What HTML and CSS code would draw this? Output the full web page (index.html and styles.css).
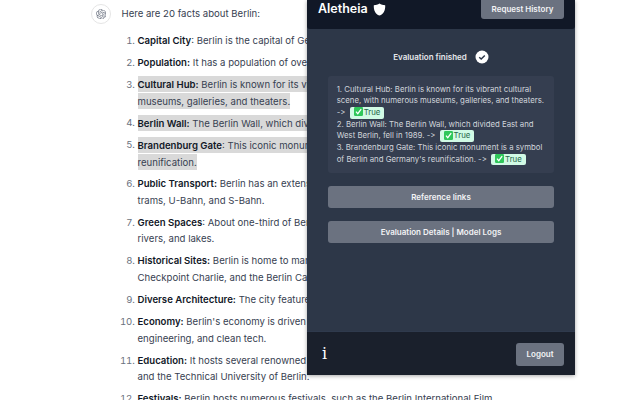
FILE: index.html
```html
<!DOCTYPE html>
<html lang="en">
<head>
<meta charset="utf-8">
<title>Aletheia</title>
<link rel="stylesheet" href="styles.css">
</head>
<body>
<main class="chat">
  <div class="avatar">
    <svg class="logo" viewBox="0 0 41 41" fill="currentColor"><path d="M37.5324 16.8707C37.9808 15.5241 38.1363 14.0974 37.9886 12.6859C37.8409 11.2744 37.3934 9.91076 36.676 8.68622C35.6126 6.83404 33.9882 5.3676 32.0373 4.4985C30.0864 3.62941 27.9098 3.40259 25.8215 3.85078C24.8796 2.7893 23.7219 1.94125 22.4257 1.36341C21.1295 0.785575 19.7249 0.491269 18.3058 0.500197C16.1708 0.495044 14.0893 1.16803 12.3614 2.42214C10.6335 3.67624 9.34853 5.44666 8.6917 7.47815C7.30085 7.76286 5.98686 8.3414 4.8377 9.17505C3.68854 10.0087 2.73073 11.0782 2.02839 12.312C0.956464 14.1591 0.498905 16.2988 0.721698 18.4228C0.944492 20.5467 1.83612 22.5449 3.268 24.1293C2.81966 25.4759 2.66413 26.9026 2.81182 28.3141C2.95951 29.7256 3.40701 31.0892 4.12437 32.3138C5.18791 34.1659 6.8123 35.6322 8.76321 36.5013C10.7141 37.3704 12.8907 37.5973 14.9789 37.1492C15.9208 38.2107 17.0786 39.0587 18.3747 39.6366C19.6709 40.2144 21.0755 40.5087 22.4946 40.4998C24.6307 40.5054 26.7133 39.8321 28.4418 38.5772C30.1704 37.3223 31.4556 35.5506 32.1119 33.5179C33.5027 33.2332 34.8167 32.6547 35.9659 31.821C37.115 30.9874 38.0728 29.9178 38.7752 28.684C39.8458 26.8371 40.3023 24.6979 40.0789 22.5748C39.8556 20.4517 38.9639 18.4544 37.5324 16.8707ZM22.4978 37.8849C20.7443 37.8874 19.0459 37.2733 17.6994 36.1501C17.7601 36.117 17.8666 36.0586 17.936 36.0161L25.9004 31.4156C26.1003 31.3019 26.2663 31.137 26.3813 30.9378C26.4964 30.7386 26.5563 30.5124 26.5549 30.2825V19.0542L29.9213 20.998C29.9389 21.0068 29.9541 21.0198 29.9656 21.0359C29.977 21.052 29.9842 21.0707 29.9867 21.0902V30.3889C29.9842 32.375 29.1946 34.2791 27.7909 35.6841C26.3872 37.0892 24.4838 37.8806 22.4978 37.8849ZM6.39227 31.0064C5.51397 29.4888 5.19742 27.7107 5.49804 25.9832C5.55718 26.0187 5.66048 26.0818 5.73461 26.1244L13.699 30.7248C13.8975 30.8408 14.1233 30.902 14.3532 30.902C14.583 30.902 14.8088 30.8408 15.0073 30.7248L24.731 25.1103V28.9979C24.7321 29.0177 24.7283 29.0376 24.7199 29.0556C24.7115 29.0736 24.6988 29.0893 24.6829 29.1012L16.6317 33.7497C14.9096 34.7416 12.8643 35.0097 10.9447 34.4954C9.02506 33.9811 7.38785 32.7263 6.39227 31.0064ZM4.29707 13.6194C5.17156 12.0998 6.55279 10.9364 8.19885 10.3327C8.19885 10.4013 8.19491 10.5228 8.19491 10.6071V19.808C8.19351 20.0378 8.25334 20.2638 8.36823 20.4629C8.48312 20.6619 8.64893 20.8267 8.84863 20.9404L18.5723 26.5542L15.206 28.4979C15.1894 28.5089 15.1703 28.5155 15.1505 28.5173C15.1307 28.5191 15.1107 28.516 15.0924 28.5082L7.04046 23.8557C5.32135 22.8601 4.06716 21.2235 3.55289 19.3046C3.03862 17.3858 3.30624 15.3413 4.29707 13.6194ZM31.955 20.0556L22.2312 14.4411L25.5976 12.4981C25.6142 12.4872 25.6333 12.4805 25.6531 12.4787C25.6729 12.4769 25.6928 12.4801 25.7111 12.4879L33.7631 17.1364C34.9967 17.849 36.0017 18.8982 36.6606 20.1613C37.3194 21.4244 37.6047 22.849 37.4832 24.2684C37.3617 25.6878 36.8382 27.0432 35.9743 28.1759C35.1103 29.3086 33.9415 30.1717 32.6047 30.6641C32.6047 30.5947 32.6047 30.4733 32.6047 30.3889V21.188C32.6066 20.9586 32.5474 20.7328 32.4332 20.5338C32.319 20.3348 32.154 20.1698 31.955 20.0556ZM35.3055 15.0128C35.2464 14.9765 35.1431 14.9142 35.069 14.8717L27.1045 10.2712C26.906 10.1554 26.6803 10.0943 26.4504 10.0943C26.2206 10.0943 25.9948 10.1554 25.7963 10.2712L16.0726 15.8858V11.9982C16.0715 11.9783 16.0753 11.9585 16.0837 11.9405C16.0921 11.9225 16.1048 11.9068 16.1207 11.8949L24.1719 7.25025C25.4053 6.53903 26.8158 6.19376 28.2383 6.25482C29.6608 6.31589 31.0364 6.78077 32.2044 7.59508C33.3723 8.40939 34.2842 9.53945 34.8334 10.8531C35.3826 12.1667 35.5464 13.6095 35.3055 15.0128ZM14.2424 21.9419L10.8752 19.9981C10.8576 19.9893 10.8423 19.9763 10.8309 19.9602C10.8195 19.9441 10.8122 19.9254 10.8098 19.9058V10.6071C10.8107 9.18295 11.2173 7.78848 11.9819 6.58696C12.7466 5.38544 13.8377 4.42659 15.1275 3.82264C16.4173 3.21869 17.8524 2.99464 19.2649 3.1767C20.6775 3.35876 22.0089 3.93941 23.1034 4.85067C23.0427 4.88379 22.937 4.94215 22.8668 4.98473L14.9024 9.58517C14.7025 9.69878 14.5366 9.86356 14.4215 10.0626C14.3065 10.2616 14.2466 10.4877 14.2479 10.7175L14.2424 21.9419ZM16.071 17.9991L20.4018 15.4978L24.7325 17.9975V22.9985L20.4018 25.4983L16.071 22.9985V17.9991Z"/></svg>
  </div>
  <div class="answer">
    <p class="intro">Here are 20 facts about Berlin:</p>
    <ol class="facts">
      <li><b>Capital City</b>: Berlin is the capital of Germany and its largest city.</li>
      <li><b>Population:</b> It has a population of over 3.6 million people.</li>
      <li><span class="hl"><b>Cultural Hub:</b> Berlin is known for its vibrant cultural scene, with numerous<br>museums, galleries, and theaters.</span></li>
      <li><span class="hl"><b>Berlin Wall:</b> The Berlin Wall, which divided East and West Berlin, fell in 1989.</span></li>
      <li><span class="hl"><b>Brandenburg Gate</b>: This iconic monument is a symbol of Berlin and Germany's<br>reunification.</span></li>
      <li><b>Public Transport:</b> Berlin has an extensive public transit system, including buses,<br>trams, U-Bahn, and S-Bahn.</li>
      <li><b>Green Spaces</b>: About one-third of Berlin's area is made up of forests, parks,<br>rivers, and lakes.</li>
      <li><b>Historical Sites:</b> Berlin is home to many historical sites, including the Reichstag,<br>Checkpoint Charlie, and the Berlin Cathedral.</li>
      <li><b>Diverse Architecture:</b> The city features a mix of historic and modern buildings.</li>
      <li><b>Economy:</b> Berlin's economy is driven by sectors such as technology, creative arts,<br>engineering, and clean tech.</li>
      <li><b>Education:</b> It hosts several renowned universities, including Humboldt University<br>and the Technical University of Berlin.</li>
      <li><b>Festivals:</b> Berlin hosts numerous festivals, such as the Berlin International Film</li>
    </ol>
  </div>
</main>

<aside class="panel">
  <header class="panel-head">
    <div class="brand">
      <span>Aletheia</span>
      <svg class="shield" viewBox="0 0 24 24" fill="currentColor"><path d="M12 1c3 2 6.500 2.800 10.500 3 .6 8.500-2.500 16.500-10.500 19C4 20.500.9 12.500 1.500 4 5.500 3.800 9 3 12 1z"/></svg>
    </div>
    <button class="btn btn-head">Request History</button>
  </header>
  <section class="panel-body">
    <div class="status">
      <span>Evaluation finished</span>
      <svg class="status-icon" viewBox="0 0 14 14"><circle cx="7" cy="7" r="6.500" fill="#fff"/><path d="M4.200 7.200l2 1.900 3.600-3.700" fill="none" stroke="#2d3748" stroke-width="1.400"/></svg>
    </div>
    <div class="result">
      1. Cultural Hub: Berlin is known for its vibrant cultural scene, with numerous museums, galleries, and theaters.<br>
      -&gt; <span class="tag"><svg class="tick" viewBox="0 0 10 10"><rect width="10" height="10" rx="1.500" fill="#2fc75a"/><path d="M2.200 5.200l2 2.200 3.800-5" fill="none" stroke="#fff" stroke-width="1.400"/></svg>True</span><br>
      2. Berlin Wall: The Berlin Wall, which divided East and West Berlin, fell in 1989. -&gt; <span class="tag"><svg class="tick" viewBox="0 0 10 10"><rect width="10" height="10" rx="1.500" fill="#2fc75a"/><path d="M2.200 5.200l2 2.200 3.800-5" fill="none" stroke="#fff" stroke-width="1.400"/></svg>True</span><br>
      3. Brandenburg Gate: This iconic monument is a symbol of Berlin and Germany's reunification. -&gt; <span class="tag"><svg class="tick" viewBox="0 0 10 10"><rect width="10" height="10" rx="1.500" fill="#2fc75a"/><path d="M2.200 5.200l2 2.200 3.800-5" fill="none" stroke="#fff" stroke-width="1.400"/></svg>True</span>
    </div>
    <button class="btn btn-wide">Reference links</button>
    <button class="btn btn-wide">Evaluation Details | Model Logs</button>
  </section>
  <footer class="panel-foot">
    <span class="info">i</span>
    <button class="btn btn-logout">Logout</button>
  </footer>
</aside>
</body>
</html>
```

FILE: styles.css
```css
html, body {
  height: 100%;
  margin: 0;
  overflow: hidden;
}

body {
  background: #fff;
  font-family: Inter, "Liberation Sans", sans-serif;
}

.chat {
  display: flex;
  gap: 10.500px;
  padding: 4px 0 0 91px;
  width: 420px;
  font-size: 9.600px;
  line-height: 16.670px;
  color: #374151;
}

.avatar {
  flex: none;
  display: flex;
  align-items: center;
  justify-content: center;
  width: 18px;
  height: 18px;
  border: 1px solid #e5e5e5;
  border-radius: 50%;
  color: #6b7280;
}

.logo {
  width: 10.500px;
  height: 10.500px;
}

.answer {
  flex: none;
  width: 420px;
}

.intro {
  margin: 0 0 10px;
  padding-top: 2px;
}

.facts {
  margin: 0;
  padding: 0 0 0 16px;
}

.facts li {
  margin-bottom: 5.330px;
}

.facts li::marker {
  color: #6b7280;
}

.facts b {
  font-weight: 600;
  color: #111827;
}

.hl {
  padding: 2.500px 0;
  background: #d9d9d9;
  -webkit-box-decoration-break: clone;
  box-decoration-break: clone;
}

.panel {
  position: absolute;
  top: 0;
  left: 307px;
  display: flex;
  flex-direction: column;
  width: 268px;
  height: 375px;
  background: #2d3748;
  color: #fff;
  box-shadow: 0 1px 4px rgba(0, 0, 0, 0.35);
}

.btn {
  border: 0;
  border-radius: 3px;
  background: #6b7280;
  color: #f3f4f6;
  font: 600 8px/1 Inter, "Liberation Sans", sans-serif;
}

.panel-head {
  flex: none;
  display: flex;
  align-items: flex-end;
  justify-content: space-between;
  height: 29px;
  padding: 0 11px 10px;
  box-sizing: border-box;
  background: #111827;
  border-radius: 0 0 3px 3px;
  overflow: hidden;
}

.brand {
  display: flex;
  align-items: center;
  gap: 5.500px;
  margin-bottom: 1px;
  font-size: 12.500px;
  font-weight: 600;
  line-height: 18px;
}

.shield {
  width: 13px;
  height: 13px;
  margin-top: 1px;
}

.btn-head {
  width: 83px;
  height: 24px;
  padding-top: 5px;
}

.panel-body {
  flex: 1;
  display: flex;
  flex-direction: column;
  padding: 0 21px;
}

.status {
  display: flex;
  align-items: center;
  justify-content: center;
  gap: 8px;
  height: 47px;
  padding-top: 8px;
  box-sizing: border-box;
  font-size: 8px;
  font-weight: 600;
  color: #e5e7eb;
}

.status-icon {
  width: 14px;
  height: 14px;
}

.result {
  height: 97px;
  margin-bottom: 13px;
  padding: 7.600px 8px 7.600px 8.700px;
  box-sizing: border-box;
  border-radius: 3px;
  background: #353e50;
  font-size: 7.800px;
  line-height: 11.670px;
  color: #d1d5db;
  font-variant-ligatures: none;
  font-feature-settings: "calt" 0;
}

.tag {
  display: inline-block;
  margin-left: 2px;
  padding: 0 4px;
  border-radius: 2px;
  background: #d1fae5;
  color: #276749;
  line-height: 11.670px;
  vertical-align: top;
}

.tick {
  width: 9px;
  height: 9px;
  margin-right: 1px;
  vertical-align: -1.500px;
}

.btn-wide {
  flex: none;
  height: 22px;
  margin-bottom: 13px;
}

.panel-foot {
  flex: none;
  display: flex;
  align-items: center;
  justify-content: space-between;
  height: 44px;
  padding: 0 11px 0 15px;
  box-sizing: border-box;
  background: #1a202c;
  border-top: 1px solid #2f3a4d;
}

.info {
  font-family: "DejaVu Serif", serif;
  font-size: 16px;
}

.btn-logout {
  width: 48px;
  height: 23px;
  margin-top: 1px;
}
```
